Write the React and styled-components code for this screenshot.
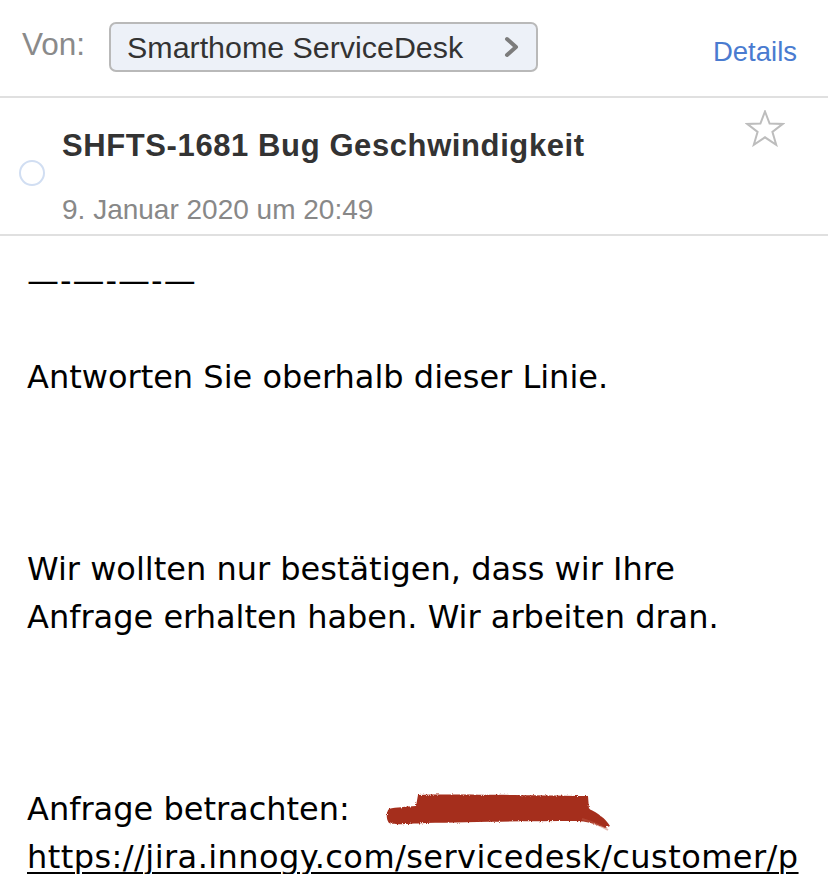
import styled, { createGlobalStyle } from "styled-components";

const GlobalStyle = createGlobalStyle`
  html, body {
    margin: 0;
    padding: 0;
    background: #ffffff;
    overflow: hidden;
  }
`;

const Page = styled.div`
  width: 828px;
  height: 874px;
  overflow: hidden;
  background: #ffffff;
`;

const SenderRow = styled.div`
  display: flex;
  align-items: center;
  height: 96px;
  padding: 0 31px 0 22px;
  border-bottom: 2px solid #e0e0e0;
`;

const Label = styled.span`
  font-family: "Liberation Sans", Arial, sans-serif;
  font-size: 31.5px;
  color: #8a8a8a;
  margin-bottom: 8px;
`;

const SenderPill = styled.div`
  display: flex;
  align-items: center;
  justify-content: space-between;
  box-sizing: border-box;
  width: 429px;
  height: 50px;
  margin-left: 24px;
  margin-bottom: 2px;
  padding: 0 16px 0 16px;
  background: #edf1f8;
  border: 2px solid #b9b9b9;
  border-radius: 7px;
  font-family: "Liberation Sans", Arial, sans-serif;
  font-size: 30.4px;
  color: #333333;
`;

const DetailsLink = styled.span`
  margin-left: auto;
  padding-top: 8px;
  font-family: "Liberation Sans", Arial, sans-serif;
  font-size: 27.5px;
  color: #4a7bd0;
`;

const SubjectBlock = styled.div`
  display: grid;
  grid-template-columns: 62px 1fr auto;
  border-bottom: 2px solid #e0e0e0;
  height: 136px;
`;

const UnreadDot = styled.div`
  width: 22px;
  height: 22px;
  margin: 0 0 0 19px;
  align-self: center;
  transform: translateY(7px);
  border: 2px solid #d1def2;
  border-radius: 50%;
`;

const SubjectText = styled.div`
  display: flex;
  flex-direction: column;
  padding-top: 29px;
  font-family: "Liberation Sans", Arial, sans-serif;
`;

const Subject = styled.div`
  font-size: 31px;
  line-height: 38px;
  font-weight: bold;
  letter-spacing: 0.6px;
  color: #333333;
`;

const DateLine = styled.div`
  margin-top: 28px;
  font-size: 28px;
  line-height: 34px;
  color: #888888;
`;

const StarBox = styled.div`
  padding: 12px 43px 0 0;
`;

const Body = styled.div`
  padding: 21px 0 0 27px;
  font-family: "DejaVu Sans", Verdana, sans-serif;
  font-size: 32px;
  line-height: 48px;
  color: #000000;
  white-space: nowrap;
`;

const Para = styled.p`
  margin: 0 0 ${(p) => p.$after}px 0;
  letter-spacing: ${(p) => p.$spacing || 0}px;
`;

const Link = styled.span`
  letter-spacing: 0.45px;
  text-decoration: underline;
  text-decoration-thickness: 2px;
  text-underline-offset: 4px;
`;

const Redaction = styled.svg`
  display: inline-block;
  vertical-align: -13px;
  margin-left: 36px;
`;

function Chevron() {
  return (
    <svg width="16" height="22" viewBox="0 0 16 22">
      <polyline
        points="3,3 12,11 3,19"
        fill="none"
        stroke="#7c7c7c"
        strokeWidth="4"
        strokeLinecap="round"
        strokeLinejoin="round"
      />
    </svg>
  );
}

function Star() {
  return (
    <svg width="40" height="37" viewBox="0 0 40 37">
      <polygon
        points="20,1.5 24.6,13.6 37.8,13.9 27.4,21.9 31.2,34.8 20,27.3 8.8,34.8 12.6,21.9 2.2,13.9 15.4,13.6"
        fill="none"
        stroke="#bdbdbd"
        strokeWidth="2"
        strokeLinejoin="miter"
      />
    </svg>
  );
}

function Scribble() {
  return (
    <Redaction width="226" height="42" viewBox="0 0 226 42">
      <defs>
        <filter id="grain" x="-5%" y="-20%" width="110%" height="140%">
          <feTurbulence type="fractalNoise" baseFrequency="0.9" numOctaves="2" result="noise" />
          <feDisplacementMap in="SourceGraphic" in2="noise" scale="3" />
        </filter>
      </defs>
      <path
        filter="url(#grain)"
        d="M3 18 C10 16, 20 16, 30 15 L32 4 C60 3, 120 4, 202 5 L203 18 C212 22, 220 28, 224 35 L219 37 C210 33, 200 30, 190 30 C140 30, 80 31, 40 32 C20 33, 8 34, 3 32 C0 28, 0 21, 3 18 Z"
        fill="#a52f1d"
      />
      <path
        d="M196 28 C206 31, 214 34, 222 39"
        stroke="#c0604c"
        strokeWidth="2"
        fill="none"
        opacity="0.45"
      />
    </Redaction>
  );
}

export default function App() {
  return (
    <Page>
      <GlobalStyle />
      <SenderRow>
        <Label>Von:</Label>
        <SenderPill>
          <span>Smarthome ServiceDesk</span>
          <Chevron />
        </SenderPill>
        <DetailsLink>Details</DetailsLink>
      </SenderRow>

      <SubjectBlock>
        <UnreadDot />
        <SubjectText>
          <Subject>SHFTS-1681 Bug Geschwindigkeit</Subject>
          <DateLine>9. Januar 2020 um 20:49</DateLine>
        </SubjectText>
        <StarBox>
          <Star />
        </StarBox>
      </SubjectBlock>

      <Body>
        <Para $after={48} $spacing={1}>
          —-—-—-—
        </Para>
        <Para $after={144}>Antworten Sie oberhalb dieser Linie.</Para>
        <Para $after={144}>
          Wir wollten nur bestätigen, dass wir Ihre
          <br />
          Anfrage erhalten haben. Wir arbeiten dran.
        </Para>
        <Para $after={0}>
          Anfrage betrachten:
          <Scribble />
          <br />
          <Link>https://jira.innogy.com/servicedesk/customer/p</Link>
        </Para>
      </Body>
    </Page>
  );
}
